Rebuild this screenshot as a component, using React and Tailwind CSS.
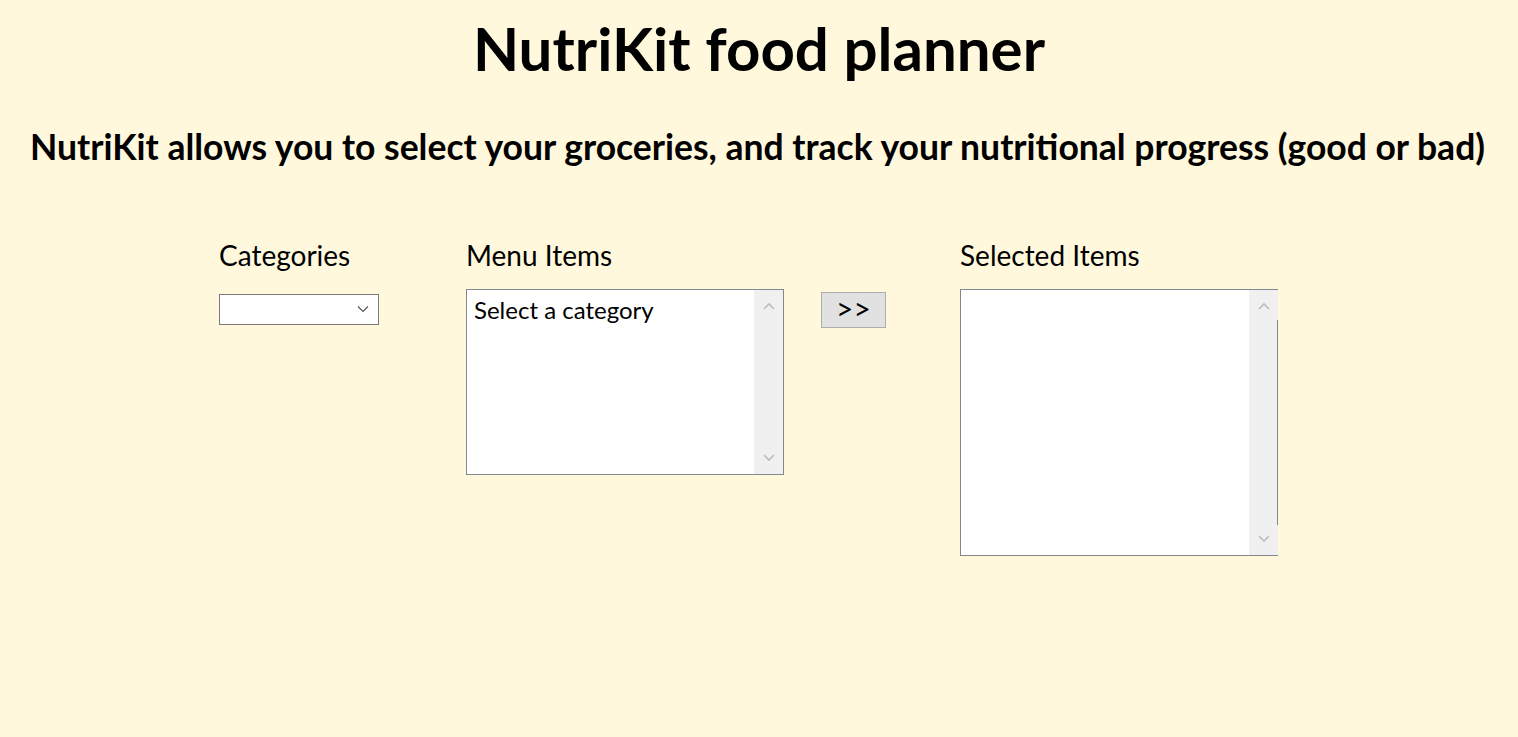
import { useState } from 'react'

function Chevron({ up }) {
  return (
    <svg width="12" height="8" viewBox="0 0 12 8" className="block">
      <path
        d={up ? 'M1 7 L6 2 L11 7' : 'M1 1 L6 6 L11 1'}
        fill="none"
        stroke="#bdbdbd"
        strokeWidth="1.6"
      />
    </svg>
  )
}

function Scrollbar({ edge }) {
  return (
    <div className="relative w-[29px] shrink-0 bg-[#f0f0f0] flex flex-col items-center justify-between py-[12px]">
      <Chevron up />
      <Chevron />
      {/* el borde derecho solo asoma en el tramo central */}
      {edge && <span className="absolute right-0 top-[30px] bottom-[30px] w-px bg-[#828790]" />}
    </div>
  )
}

export default function App() {
  const [categoria] = useState('')

  return (
    <div className="min-h-[737px] bg-[#fff8dc] text-black font-['Lato',sans-serif]">
      <h1 className="text-center font-bold text-[60px] leading-none pt-[18px]">NutriKit food planner</h1>
      <h2 className="text-center font-bold text-[35.5px] leading-none mt-[51px] pr-[3px]">
        NutriKit allows you to select your groceries, and track your nutritional progress (good or bad)
      </h2>

      <div className="flex pl-[219px] mt-[76px]">
        <div className="w-[247px] shrink-0">
          <p className="text-[28px] leading-none h-[35px]">Categories</p>
          <div className="mt-[18px] w-[160px] h-[31px] bg-white border border-[#7a7a7a] flex items-center justify-end pr-[9px]">
            <svg width="12" height="8" viewBox="0 0 12 8">
              <path d="M1 1.5 L6 6.5 L11 1.5" fill="none" stroke="#555" strokeWidth="1.2" />
            </svg>
          </div>
          <span className="hidden">{categoria}</span>
        </div>

        <div className="w-[355px] shrink-0">
          <p className="text-[28px] leading-none h-[35px]">Menu Items</p>
          <div className="mt-[13px] w-[318px] h-[186px] bg-white border border-[#828790] flex">
            <div className="flex-1 px-[7px] pt-[5px] text-[24px] leading-tight">Select a category</div>
            <Scrollbar />
          </div>
        </div>

        <div className="w-[139px] shrink-0 pt-[51px]">
          <button className="w-[65px] h-[36px] bg-[#e1e1e1] border border-[#adadad] text-[30px] leading-none pb-[4px]">
            &gt;&gt;
          </button>
        </div>

        <div className="shrink-0">
          <p className="text-[28px] leading-none h-[35px]">Selected Items</p>
          <div className="mt-[13px] w-[318px] h-[267px] bg-white border border-[#828790] border-r-0 flex">
            <div className="flex-1" />
            <Scrollbar edge />
          </div>
        </div>
      </div>
    </div>
  )
}
